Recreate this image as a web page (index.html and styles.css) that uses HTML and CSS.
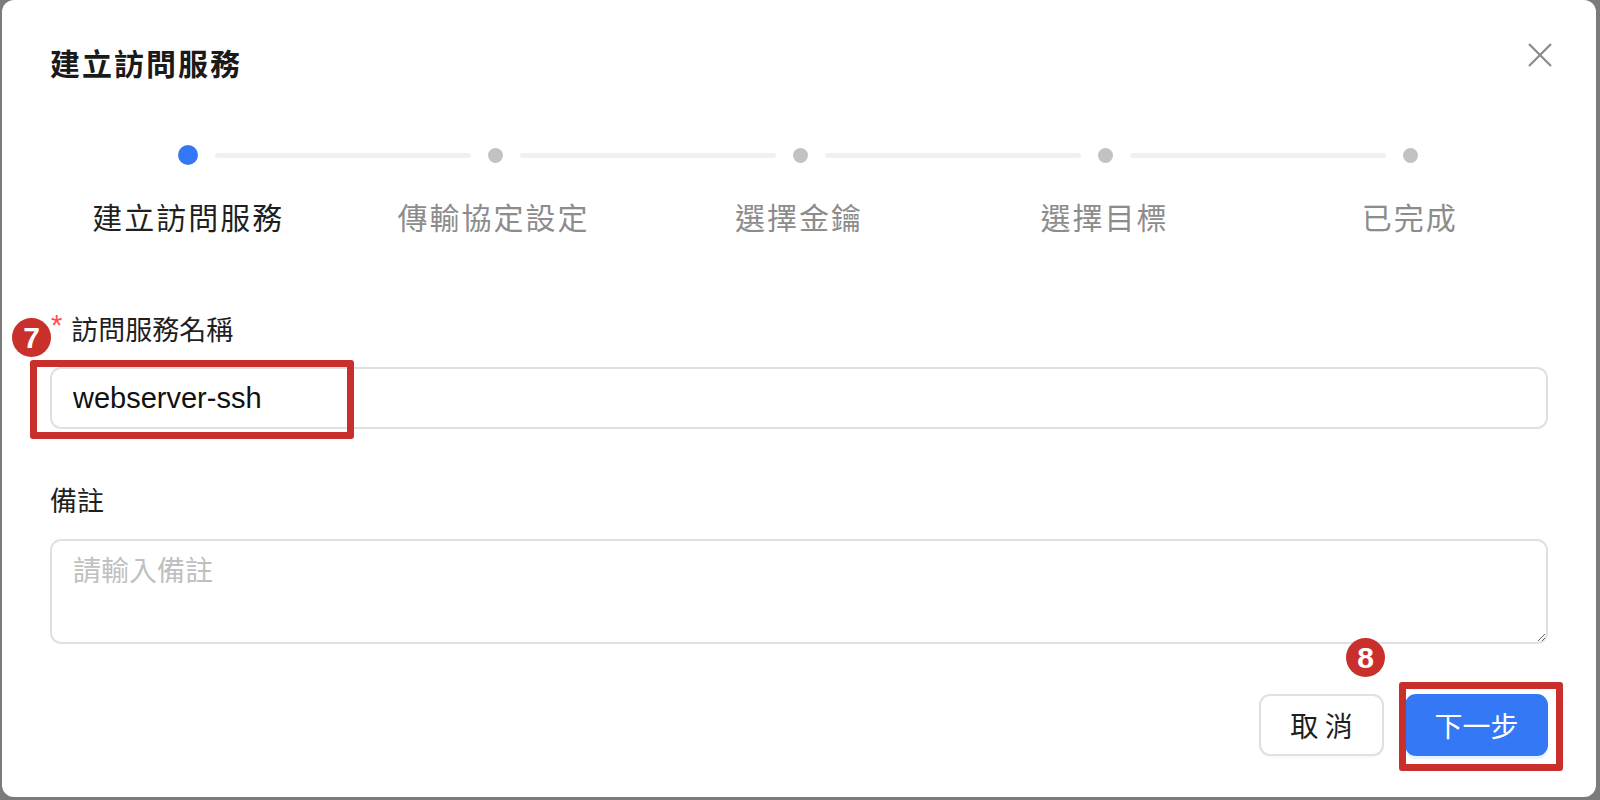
FILE: index.html
```html
<!DOCTYPE html>
<html lang="zh-Hant">
<head>
<meta charset="utf-8">
<title>建立訪問服務</title>
<link rel="stylesheet" href="styles.css">
</head>
<body>
<div class="modal">
  <div class="header">
    <h1 class="title">建立訪問服務</h1>
    <button class="close" type="button" aria-label="close">
      <svg width="26" height="26" viewBox="0 0 26 26"><path d="M2 2L24 24M24 2L2 24" stroke="#8a8a8a" stroke-width="2.2" fill="none"/></svg>
    </button>
  </div>

  <div class="steps">
    <div class="track">
      <span class="dot active"></span><span class="line"></span>
      <span class="dot"></span><span class="line"></span>
      <span class="dot"></span><span class="line"></span>
      <span class="dot"></span><span class="line"></span>
      <span class="dot"></span>
    </div>
    <div class="labels">
      <span class="step-label active">建立訪問服務</span>
      <span class="step-label">傳輸協定設定</span>
      <span class="step-label">選擇金鑰</span>
      <span class="step-label">選擇目標</span>
      <span class="step-label">已完成</span>
    </div>
  </div>

  <form class="form">
    <div class="field">
      <label class="field-label"><span class="req">*</span>訪問服務名稱</label>
      <input class="input" type="text" value="webserver-ssh">
    </div>
    <div class="field second">
      <label class="field-label">備註</label>
      <textarea class="textarea" placeholder="請輸入備註"></textarea>
    </div>
  </form>

  <div class="footer">
    <button class="btn" type="button">取 消</button>
    <button class="btn primary" type="button">下一步</button>
  </div>

  <div class="mark rect rect-input"></div>
  <div class="mark badge badge-7">7</div>
  <div class="mark badge badge-8">8</div>
  <div class="mark rect rect-next"></div>
</div>
</body>
</html>
```

FILE: styles.css
```css
* { box-sizing: border-box; }
html, body { margin: 0; padding: 0; }
body {
  background: #7b7b7b;
  padding: 0 4px 3px 2px;
  font-family: "Noto Sans CJK TC", "Liberation Sans", sans-serif;
  color: #1f1f1f;
}
.modal {
  position: relative;
  background: #fff;
  height: 797px;
  border-radius: 12px;
  padding: 42px 48px 0 48px;
}
.header {
  display: flex;
  justify-content: space-between;
  align-items: flex-start;
  height: 40px;
}
.title {
  margin: 0;
  font-size: 30px;
  line-height: 40px;
  font-weight: 700;
  letter-spacing: 2px;
  color: #1a1a1a;
}
.close {
  border: 0;
  background: none;
  padding: 0;
  margin: 0 -5px 0 0;
  width: 26px;
  height: 26px;
  cursor: pointer;
}
.close svg { display: block; }

.steps {
  margin: 63px -14.5px 0 -14.5px;
}
.track {
  display: flex;
  align-items: center;
  height: 20px;
  padding: 0 145px 0 142.5px;
}
.dot {
  width: 15px;
  height: 15px;
  border-radius: 50%;
  background: #c2c2c2;
  flex: none;
}
.dot.active {
  width: 20px;
  height: 20px;
  background: #3478f6;
}
.line {
  flex: 1;
  height: 5px;
  border-radius: 3px;
  background: #f0f0f0;
  margin: 0 17px;
}
.labels {
  display: grid;
  grid-template-columns: repeat(5, 1fr);
  margin-top: 31px;
}
.step-label {
  text-align: center;
  font-size: 30px;
  line-height: 40px;
  letter-spacing: 2px;
  color: #8c8c8c;
}
.step-label.active { color: #1f1f1f; }

.form { margin-top: 73px; }
.field { display: flex; flex-direction: column; }
.field.second { margin-top: 51px; }
.field-label {
  font-size: 27px;
  line-height: 40px;
  color: #1f1f1f;
  display: flex;
  align-items: center;
}
.req {
  color: #ff4d4f;
  font-family: "Liberation Sans", sans-serif;
  font-size: 29px;
  margin: -8px 9px 0 1px;
}
.input {
  margin-top: 18px;
  height: 62px;
  border: 2px solid #e0e0e0;
  border-radius: 11px;
  padding: 0 21px;
  font-family: "Liberation Sans", sans-serif;
  font-size: 29px;
  color: #111;
  outline: none;
}
.textarea {
  margin-top: 19px;
  height: 105px;
  border: 2px solid #e0e0e0;
  border-radius: 11px;
  padding: 8px 21px;
  font-family: "Noto Sans CJK TC", sans-serif;
  font-size: 28px;
  line-height: 40px;
  color: #111;
  resize: vertical;
  outline: none;
}
.textarea::placeholder { color: #c0c0c0; }

.footer {
  display: flex;
  justify-content: flex-end;
  gap: 21px;
  margin-top: 50px;
}
.btn {
  height: 62px;
  border-radius: 11px;
  border: 2px solid #e0e0e0;
  background: #fff;
  font-family: "Noto Sans CJK TC", sans-serif;
  font-size: 28px;
  color: #1f1f1f;
  width: 125px;
  padding: 0;
  box-shadow: 0 2px 0 rgba(0,0,0,0.02);
}
.btn.primary {
  width: 143px;
  background: #3478f6;
  border-color: #3478f6;
  color: #fff;
  box-shadow: 0 3px 0 rgba(5,145,255,0.1);
}

.mark { position: absolute; }
.rect {
  border: 7px solid #c9302c;
  border-radius: 3px;
}
.rect-input { left: 28px; top: 360px; width: 324px; height: 79px; }
.rect-next { left: 1397px; top: 682px; width: 164px; height: 89px; }
.badge {
  width: 39px;
  height: 39px;
  border-radius: 50%;
  background: #c9302c;
  color: #fff;
  font-family: "Liberation Sans", sans-serif;
  font-weight: 700;
  font-size: 30px;
  line-height: 39px;
  text-align: center;
}
.badge-7 { left: 10px; top: 318px; }
.badge-8 { left: 1344px; top: 638px; }
```
